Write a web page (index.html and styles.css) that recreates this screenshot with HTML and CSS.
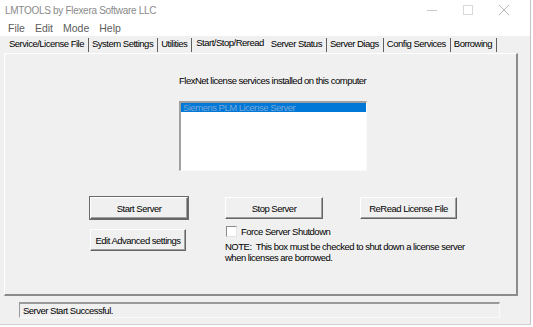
FILE: index.html
```html
<!DOCTYPE html>
<html lang="en">
<head>
    <meta charset="UTF-8">
    <title>LMTOOLS by Flexera Software LLC</title>
    <link rel="stylesheet" href="styles.css">
</head>
<body>
    <div class="window">
        <div class="titlebar">
            <span class="title">LMTOOLS by Flexera Software LLC</span>
            <div class="controls">
                <svg width="12" height="12" viewBox="0 0 12 12"><path d="M1 6.5h10" stroke="#c8c8c8" stroke-width="1"/></svg>
                <svg width="12" height="12" viewBox="0 0 12 12"><rect x="1.5" y="1.5" width="9" height="9" fill="none" stroke="#d8d8d8"/></svg>
                <svg width="12" height="12" viewBox="0 0 12 12"><path d="M1 1l10 10M11 1L1 11" stroke="#b8b8b8" stroke-width="1"/></svg>
            </div>
        </div>

        <div class="menubar">
            <span>File</span>
            <span>Edit</span>
            <span>Mode</span>
            <span>Help</span>
        </div>

        <div class="tabs">
            <span class="tab">Service/License File</span>
            <span class="tab">System Settings</span>
            <span class="tab">Utilities</span>
            <span class="tab active">Start/Stop/Reread</span>
            <span class="tab">Server Status</span>
            <span class="tab">Server Diags</span>
            <span class="tab">Config Services</span>
            <span class="tab">Borrowing</span>
        </div>

        <div class="panel">
            <div class="services">
                <div class="caption">FlexNet license services installed on this computer</div>
                <div class="listbox">
                    <div class="item selected">Siemens PLM License Server</div>
                </div>
            </div>

            <div class="actions">
                <button class="btn default">Start Server</button>
                <button class="btn">Stop Server</button>
                <button class="btn">ReRead License File</button>

                <button class="btn advanced">Edit Advanced settings</button>
                <div class="shutdown">
                    <label class="check"><span class="box"></span>Force Server Shutdown</label>
                    <p class="note">NOTE:&nbsp; This box must be checked to shut down a license server<br>when licenses are borrowed.</p>
                </div>
            </div>
        </div>

        <div class="statusbar">
            <div class="status">Server Start Successful.</div>
        </div>
    </div>
</body>
</html>
```

FILE: styles.css
```css
body {
    margin: 0;
    background: #ffffff;
    font-family: "Liberation Sans", Arial, sans-serif;
    font-size: 9.5px;
    letter-spacing: -0.5px;
    white-space: nowrap;
    color: #000;
}

.window {
    width: 530px;
    height: 324px;
    background: #f0f0f0;
    border-right: 1px solid #c4c4c4;
    border-bottom: 1px solid #d0d0d0;
}

.titlebar {
    height: 20px;
    background: #ffffff;
    display: flex;
    align-items: center;
    justify-content: space-between;
}

.title {
    padding-left: 5px;
    font-size: 10px;
    letter-spacing: -0.3px;
    color: #8a8a8a;
}

.controls {
    display: flex;
    gap: 24px;
    padding-right: 20px;
}

.menubar {
    height: 16px;
    background: #ffffff;
    display: flex;
    align-items: center;
    gap: 10px;
    padding-left: 8px;
    font-size: 10.5px;
    letter-spacing: 0;
    color: #5c5c5c;
}

.tabs {
    height: 17px;
    display: flex;
    align-items: flex-end;
    padding-left: 6px;
}

.tab {
    flex-shrink: 0;
    padding: 0 4px 2px 3px;
    border-right: 1px solid #606060;
    line-height: 12px;
    margin-bottom: 1px;
}

.tab.active {
    padding: 0 3px 4px 4px;
    margin-bottom: 0;
    border-right-color: #f0f0f0;
}

.panel {
    height: 240px;
    margin: 0 12px 0 4px;
    border-top: 1px solid #ffffff;
    border-left: 1px solid #ffffff;
    border-right: 2px solid #8c8c8c;
    border-bottom: 2px solid #8c8c8c;
}

.services {
    padding: 21px 0 0 174px;
}

.caption {
    height: 26px;
}

.listbox {
    width: 185px;
    height: 67px;
    background: #fff;
    border-top: 2px solid #a0a0a0;
    border-left: 2px solid #a0a0a0;
    border-right: 1px solid #fafafa;
    border-bottom: 1px solid #fafafa;
}

.item {
    height: 9px;
    line-height: 9px;
    padding-left: 2px;
}

.selected {
    background: #0078d7;
    color: #7ba8d8;
}

.actions {
    margin: 26px 0 0 85px;
    display: grid;
    grid-template-columns: 98px 98px 97px;
    column-gap: 37px;
    row-gap: 6px;
}

.btn {
    height: 22px;
    padding: 0;
    font: inherit;
    letter-spacing: inherit;
    background: #f0f0f0;
    border: 1px solid;
    border-color: #ffffff #646464 #646464 #ffffff;
    box-shadow: inset -1px -1px 0 #a0a0a0;
}

.btn.default {
    outline: 1px solid #6a6a6a;
}

.btn.advanced {
    width: 96px;
    margin-top: 4px;
}

.shutdown {
    grid-column: 2 / 4;
}

.check {
    display: flex;
    align-items: center;
    gap: 4px;
    height: 11px;
    margin-top: 1px;
    padding-left: 1px;
}

.box {
    width: 9px;
    height: 9px;
    background: #fff;
    border-top: 1px solid #8a8a8a;
    border-left: 1px solid #8a8a8a;
    border-right: 1px solid #e4e4e4;
    border-bottom: 1px solid #e4e4e4;
}

.note {
    margin: 4px 0 0 0;
    line-height: 11px;
}

.statusbar {
    padding: 6px 0 0 19px;
}

.status {
    width: 476px;
    height: 13px;
    line-height: 13px;
    padding-left: 3px;
    border-top: 2px solid #9a9a9a;
    border-left: 1px solid #9a9a9a;
    border-right: 1px solid #fafafa;
    border-bottom: 1px solid #fafafa;
}
```
